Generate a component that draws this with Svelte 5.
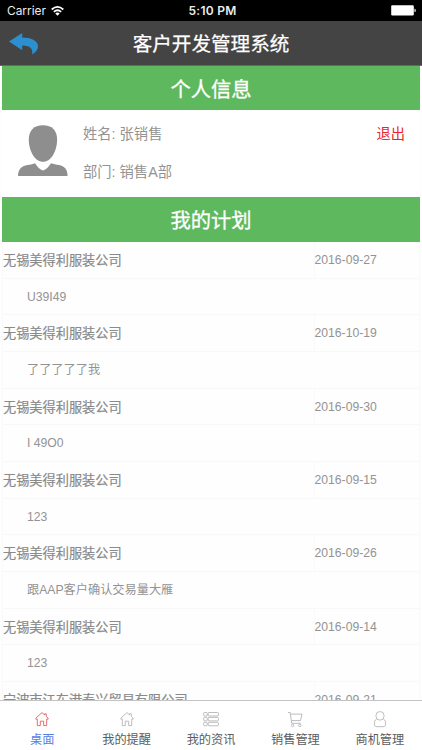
<script>
  const company = '无锡美得利服装公司';
  const plans = [
    { name: company, date: '2016-09-27', note: 'U39I49' },
    { name: company, date: '2016-10-19', note: '了了了了了我' },
    { name: company, date: '2016-09-30', note: 'I 49O0' },
    { name: company, date: '2016-09-15', note: '123' },
    { name: company, date: '2016-09-26', note: '跟AAP客户确认交易量大雁' },
    { name: company, date: '2016-09-14', note: '123' },
    { name: '宁波市江东港泰兴贸易有限公司', date: '2016-09-21', note: '' }
  ];
  const tabs = [
    { label: '桌面', icon: 'home', active: true },
    { label: '我的提醒', icon: 'home' },
    { label: '我的资讯', icon: 'list' },
    { label: '销售管理', icon: 'cart' },
    { label: '商机管理', icon: 'user' }
  ];
</script>

<div class="app">
  <div class="status">
    <div class="carrier">
      <span>Carrier</span>
      <svg width="13" height="10" viewBox="0 0 13 10" fill="none" stroke="#fff" stroke-width="1.7">
        <path d="M.7 3.5Q6.5-1.7 12.3 3.5M2.8 5.8Q6.5 2.7 10.2 5.8" />
        <path d="M4.3 7.4Q6.5 5.7 8.7 7.4L6.5 9.7Z" fill="#fff" stroke="none" />
      </svg>
    </div>
    <span class="time">5:10 PM</span>
    <div class="battery">
      <svg width="25" height="11" viewBox="0 0 25 11">
        <rect x=".2" y=".3" width="22.6" height="10.2" rx="1.2" fill="#fff" />
        <path d="M23.4 3.6Q25 4 25 5.4T23.4 7.2Z" fill="#ccc" />
      </svg>
    </div>
  </div>

  <header>
    <svg class="back" width="30" height="22" viewBox="0 0 30 22">
      <path d="M0 8.4L13.2 0V4.6C22 4.6 28.8 8 29 13C29.1 17 26.2 19.8 23 21.5C24.3 16.3 22 12.6 13.2 12.4V17.3Z" fill="#2b8fd0" />
    </svg>
    <h1>客户开发管理系统</h1>
  </header>

  <main>
    <h2>个人信息</h2>
    <section class="profile">
      <svg class="avatar" width="50" height="52" viewBox="0 0 50 52" fill="#8e8e8e">
        <path d="M25 .2C34 .2 39.1 5.2 39.1 14.5C39.1 26 33.2 36.8 25 36.8S10.8 26 10.8 14.5C10.8 5.2 16 .2 25 .2Z" />
        <path d="M0 51C.2 43.5 4.2 41 9.5 40C12.5 39.4 15.5 39 17 38.2C19.4 42 22 44.6 25 45.6C28 44.6 30.7 42 33 38.2C35.5 39.2 38 39.4 41 40C46.5 41.2 49.4 44 49.6 51Z" />
      </svg>
      <div class="info">
        <div>姓名: 张销售</div>
        <div>部门: 销售A部</div>
      </div>
      <span class="logout">退出</span>
    </section>

    <h2 class="plan-title">我的计划</h2>
    <section class="plans">
      {#each plans as plan}
        <div class="row">
          <span class="name">{plan.name}</span>
          <span class="date">{plan.date}</span>
        </div>
        <div class="note">{plan.note}</div>
      {/each}
    </section>
  </main>

  <nav>
    {#each tabs as tab}
      <div class="tab" class:active={tab.active}>
        <svg width="16" height="17" viewBox="0 0 16 17" fill="none" stroke="currentColor" stroke-width=".9" stroke-linejoin="round">
          {#if tab.icon === 'home'}
            <path d="M3.3 8.2H1.9V7.1L8 1.6L10.7 4V2.8H12.3V5.5L14.1 7.1V8.2H12.7V14.6H9.7V10.2H6.3V14.6H3.3Z" />
          {:else if tab.icon === 'list'}
            {#each [1.5, 6.4, 11.3] as y}
              <rect x=".7" {y} width="3.5" height="3.5" rx=".8" />
              <rect x="5.2" {y} width="10.2" height="3.5" rx=".8" />
            {/each}
          {:else if tab.icon === 'cart'}
            <path d="M1 1.5H3.2L4.7 12.3H13.8M3.5 3.1H15L13.5 9.6H4.4" />
            <circle cx="5.6" cy="14.4" r="1.2" />
            <circle cx="12.8" cy="14.4" r="1.2" />
          {:else}
            <rect x="4" y=".6" width="8" height="8.5" rx="3.8" />
            <path d="M4.7 7.9C2.8 9 2.4 10.6 2.4 13.2C2.4 15 3.4 15.7 5 15.7H11C12.7 15.7 13.6 15 13.6 13.2C13.6 10.6 13.2 9 11.3 7.9" />
          {/if}
        </svg>
        <span>{tab.label}</span>
      </div>
    {/each}
  </nav>
</div>

<style>
  :global(body) {
    margin: 0;
  }
  .app {
    width: 422px;
    height: 750px;
    display: flex;
    flex-direction: column;
    overflow: hidden;
    background: #fefefe;
    font-family: "Liberation Sans", "Noto Sans CJK SC", sans-serif;
    color: #939393;
  }
  svg {
    display: block;
    flex: none;
  }
  .status {
    height: 21px;
    flex: none;
    display: grid;
    grid-template-columns: 1fr auto 1fr;
    align-items: center;
    background: #000;
    color: #ececec;
    font-family: Inter, sans-serif;
    font-size: 11.9px;
    padding: 0 6px 0 7px;
    box-sizing: border-box;
  }
  .carrier {
    display: flex;
    align-items: center;
    gap: 5px;
  }
  .time {
    font-weight: 600;
    font-size: 12px;
    letter-spacing: .25px;
    padding-left: 2px;
  }
  .battery {
    display: flex;
    justify-content: flex-end;
  }
  header {
    height: 45px;
    flex: none;
    display: grid;
    grid-template-columns: 1fr auto 1fr;
    align-items: center;
    background: #444;
    border-bottom: 1px solid #4c7d4b;
    box-sizing: border-box;
    color: #fff;
  }
  .back {
    margin: 1px 0 0 9px;
  }
  h1 {
    margin: 0;
    padding-top: 2px;
    font-size: 19.6px;
    line-height: 42px;
    font-weight: 400;
    -webkit-text-stroke: .25px currentColor;
  }
  main {
    height: 634px;
    flex: none;
    overflow: hidden;
    padding: 0 2px;
    box-sizing: border-box;
  }
  h2 {
    margin: 0;
    height: 44px;
    line-height: 48px;
    background: #5eb85e;
    color: #fff;
    font-size: 20.3px;
    font-weight: 400;
    text-align: center;
    -webkit-text-stroke: .3px currentColor;
  }
  .plan-title {
    height: 45px;
  }
  .profile {
    height: 87px;
    display: flex;
    background: #fff;
    font-size: 14.3px;
  }
  .avatar {
    margin: 15px 0 0 16px;
  }
  .info {
    flex: 1;
    margin: 6px 0 0 15px;
    line-height: 37.5px;
  }
  .logout {
    color: #e8262c;
    line-height: 37.5px;
    margin: 6px 15px 0 0;
  }
  .plans {
    border: 1px solid #f9f9f9;
    border-top: 0;
  }
  .row,
  .note {
    height: 36.67px;
    box-sizing: border-box;
    border-bottom: 1px solid #f8f8f8;
    line-height: 37px;
    font-size: 12.2px;
    white-space: nowrap;
  }
  .row {
    display: flex;
  }
  .name {
    flex: 1;
    font-size: 13.2px;
    color: #8a8a8a;
    -webkit-text-stroke: .2px currentColor;
  }
  .date {
    width: 104.5px;
    border-left: 1px solid #f9f9f9;
  }
  .note {
    padding-left: 24px;
  }
  nav {
    height: 50px;
    flex: none;
    display: flex;
    background: #fff;
    border-top: 1px solid #c4c4c4;
    box-sizing: border-box;
    color: #5c5c5c;
  }
  .tab {
    flex: 1;
    display: flex;
    flex-direction: column;
    align-items: center;
    padding-top: 10px;
    font-size: 12.2px;
    line-height: 18px;
    gap: 3px;
  }
  .tab svg {
    color: #b5b5b5;
  }
  .tab.active {
    color: #5b7fe0;
  }
  .tab.active svg {
    color: #e2605f;
  }
</style>
